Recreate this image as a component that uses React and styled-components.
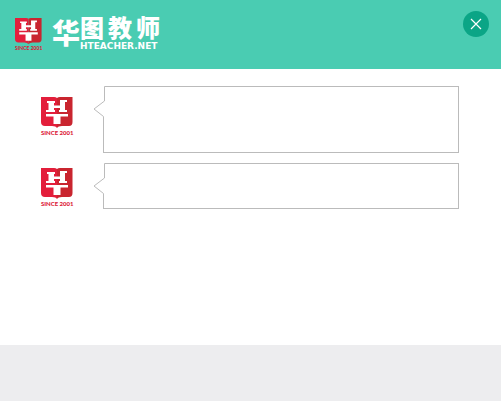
import React from "react";
import styled, { createGlobalStyle } from "styled-components";

const GlobalStyle = createGlobalStyle`
  * { box-sizing: border-box; }
  body { margin: 0; background: #fff; font-family: "Liberation Sans", "Noto Sans CJK SC", sans-serif; }
`;

const Page = styled.div`
  min-height: 100vh;
  display: flex;
  flex-direction: column;
`;

const Header = styled.header`
  height: 69px;
  flex: none;
  display: flex;
  align-items: flex-start;
  gap: 10px;
  padding: 11px 12px 0 15px;
  background: #4accb2;
`;

const Emblem = styled.svg`
  display: block;
  flex: none;
  width: ${({ $size }) => $size}px;
  overflow: visible;
`;

const EmblemSlot = styled.div`
  padding-top: 7px;
`;

const Brand = styled.h1`
  display: flex;
  align-items: flex-start;
  margin: 5px auto 0 0;
  color: #fff;
  font-family: "Noto Sans CJK SC", sans-serif;
  font-weight: 900;
`;

const BrandInitial = styled.span`
  font-size: 28px;
  line-height: 32px;
`;

const BrandRest = styled.span`
  display: flex;
  flex-direction: column;
  gap: 4px;
  min-width: 80px;
`;

const BrandName = styled.span`
  display: flex;
  justify-content: space-between;
  font-size: 24px;
  line-height: 22px;
  white-space: nowrap;
`;

const BrandSite = styled.span`
  font-family: "DejaVu Sans", sans-serif;
  font-size: 9px;
  font-weight: 700;
  line-height: 9px;
`;

const CloseButton = styled.button`
  display: grid;
  place-items: center;
  flex: none;
  width: 26px;
  height: 26px;
  padding: 0;
  border: 0;
  border-radius: 50%;
  background: #0ba586;
  cursor: pointer;
`;

const Messages = styled.main`
  flex: 1;
  display: flex;
  flex-direction: column;
  gap: 10px;
  padding: 17px 42px 17px 41px;
`;

const Message = styled.article`
  display: flex;
  align-items: flex-start;
  gap: 30px;
`;

const Avatar = styled.div`
  flex: none;
  width: 32px;
  padding-top: ${({ $compact }) => ($compact ? 5 : 11)}px;
`;

const Bubble = styled.div`
  position: relative;
  flex: 1;
  min-height: ${({ $compact }) => ($compact ? 46 : 67)}px;
  border: 1px solid #bbb;
  background: #fff;
`;

const Tail = styled.svg`
  position: absolute;
  top: -1px;
  left: -11px;
  width: 12px;
  height: 32px;
`;

const Footer = styled.footer`
  flex: none;
  height: 56px;
  background: #ededef;
`;

function Logo({ size }) {
  return (
    <Emblem $size={size} viewBox="0 0 32 40" role="img" aria-label="HT since 2001">
      <path d="M0 0H13Q15 0 16 1V31Q15 29 11 29H4Q0 29 0 25Z" fill="#e31e3b" />
      <path d="M16 1Q17 0 19 0H31.5V25Q31.5 29 28 29H21Q17 29 16 31Z" fill="#c9252f" />
      <path
        d="M6 4H14V6H13V8.5H19V3H26V5H24V13H26V15H18V13H19V11H13V13H14V15H5V13H7.5V6H6Z"
        fill="#fff"
      />
      <path d="M5 17H27V19.5H19.5V27H12.5V19.5H5Z" fill="#fff" />
      <text x="0" y="38" fill="#dc2038" fontFamily="Lato, sans-serif" fontSize="6" fontWeight="900">
        SINCE 2001
      </text>
    </Emblem>
  );
}

function ChatMessage({ compact }) {
  return (
    <Message>
      <Avatar $compact={compact}>
        <Logo size={32} />
      </Avatar>
      <Bubble $compact={compact}>
        <Tail viewBox="0 0 12 32" aria-hidden="true">
          <path d="M10 0H12V31H10Z" fill="#fff" />
          <path d="M12 .5H11.5V15L1 23L10.5 30.5V32" fill="#fff" stroke="#bbb" />
        </Tail>
      </Bubble>
    </Message>
  );
}

export default function App() {
  return (
    <>
      <GlobalStyle />
      <Page>
        <Header>
          <EmblemSlot>
            <Logo size={27} />
          </EmblemSlot>
          <Brand>
            <BrandInitial>华</BrandInitial>
            <BrandRest>
              <BrandName>
                <span>图</span>
                <span>教</span>
                <span>师</span>
              </BrandName>
              <BrandSite>HTEACHER.NET</BrandSite>
            </BrandRest>
          </Brand>
          <CloseButton type="button" aria-label="关闭">
            <svg width="12" height="12" viewBox="0 0 12 12" aria-hidden="true">
              <path d="M1 1L11 11M11 1L1 11" stroke="#fff" strokeWidth="1.2" />
            </svg>
          </CloseButton>
        </Header>
        <Messages>
          <ChatMessage />
          <ChatMessage compact />
        </Messages>
        <Footer />
      </Page>
    </>
  );
}
